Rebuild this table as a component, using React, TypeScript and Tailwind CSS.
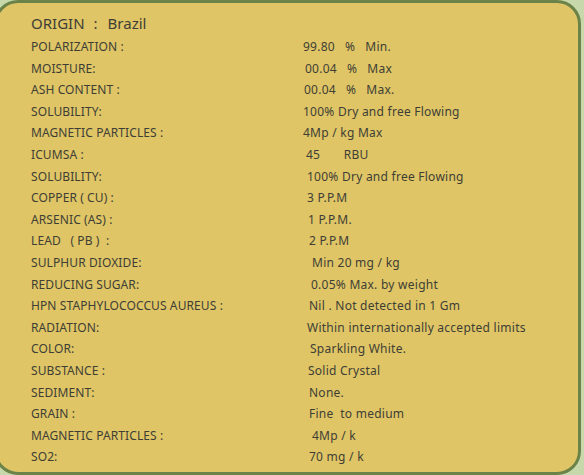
const rows: { label: string; value: string; pad: string }[] = [
  { label: 'POLARIZATION :', value: '99.80   %   Min.', pad: 'pl-0' },
  { label: 'MOISTURE:', value: '00.04   %   Max', pad: 'pl-[2px]' },
  { label: 'ASH CONTENT :', value: '00.04   %   Max.', pad: 'pl-[1px]' },
  { label: 'SOLUBILITY:', value: '100% Dry and free Flowing', pad: 'pl-0' },
  { label: 'MAGNETIC PARTICLES :', value: '4Mp / kg Max', pad: 'pl-0' },
  { label: 'ICUMSA :', value: '45       RBU', pad: 'pl-[3px]' },
  { label: 'SOLUBILITY:', value: '100% Dry and free Flowing', pad: 'pl-[4px]' },
  { label: 'COPPER ( CU) :', value: '3 P.P.M', pad: 'pl-[4px]' },
  { label: 'ARSENIC (AS) :', value: '1 P.P.M.', pad: 'pl-[5px]' },
  { label: 'LEAD   ( PB )  :', value: '2 P.P.M', pad: 'pl-[6px]' },
  { label: 'SULPHUR DIOXIDE:', value: 'Min 20 mg / kg', pad: 'pl-[9px]' },
  { label: 'REDUCING SUGAR:', value: '0.05% Max. by weight', pad: 'pl-[8px]' },
  { label: 'HPN STAPHYLOCOCCUS AUREUS :', value: 'Nil . Not detected in 1 Gm', pad: 'pl-[6px]' },
  { label: 'RADIATION:', value: 'Within internationally accepted limits', pad: 'pl-[4px]' },
  { label: 'COLOR:', value: 'Sparkling White.', pad: 'pl-[7px]' },
  { label: 'SUBSTANCE :', value: 'Solid Crystal', pad: 'pl-[5px]' },
  { label: 'SEDIMENT:', value: 'None.', pad: 'pl-[6px]' },
  { label: 'GRAIN :', value: 'Fine  to medium', pad: 'pl-[6px]' },
  { label: 'MAGNETIC PARTICLES :', value: '4Mp / k', pad: 'pl-[9px]' },
  { label: 'SO2:', value: '70 mg / k', pad: 'pl-[6px]' },
];

export default function App() {
  return (
    <div className="w-[584px] h-[475px] overflow-hidden bg-[#c7d9aa]">
      <div
        className="-ml-[6px] w-[587px] h-[475px] rounded-[24px] border-[3px] border-[#6b8249] bg-[#dfc566] text-[#3e3e35] pl-[34px] pt-[8px]"
        style={{ fontFamily: '"Noto Sans", "DejaVu Sans", sans-serif' }}
      >
        <div className="flex text-[15px] leading-[24px]">
          <span>ORIGIN</span>
          <span className="ml-[9px]">:</span>
          <span className="ml-[10px]">Brazil</span>
        </div>
        <div className="mt-[1px] grid grid-cols-[272px_1fr] text-[12px] leading-[21.6px]">
          {rows.map((r, i) => (
            <div key={i} className="contents">
              <div className="whitespace-pre tracking-[0.1px]">{r.label}</div>
              <div className={`whitespace-pre tracking-[0.25px] ${r.pad}`}>{r.value}</div>
            </div>
          ))}
        </div>
      </div>
    </div>
  );
}
